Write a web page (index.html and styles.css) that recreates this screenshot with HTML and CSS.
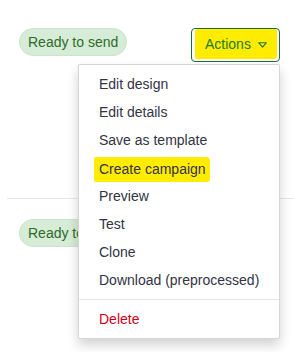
FILE: index.html
```html
<!DOCTYPE html>
<html>
<head>
<meta charset="utf-8">
<link rel="stylesheet" href="styles.css">
</head>
<body>
<div class="list">
  <div class="row row-first">
    <span class="badge">Ready to send</span>
    <div class="actions">
      <button class="btn"><span class="hl">Actions <svg class="caret" width="9" height="6" viewBox="0 0 9 6"><path d="M0.8 0.8 H8.2 L4.5 5.2 Z" fill="none" stroke="#1d7a2e" stroke-width="1.1" stroke-linejoin="round"/></svg></span></button>
      <ul class="menu">
        <li>Edit design</li>
        <li>Edit details</li>
        <li>Save as template</li>
        <li><span class="mark">Create campaign</span></li>
        <li>Preview</li>
        <li>Test</li>
        <li>Clone</li>
        <li>Download (preprocessed)</li>
        <li class="divider"></li>
        <li class="danger">Delete</li>
      </ul>
    </div>
  </div>
  <div class="row">
    <span class="badge">Ready to send</span>
    <div class="actions">
      <button class="btn"><span class="plain">Actions <svg class="caret" width="9" height="6" viewBox="0 0 9 6"><path d="M0.8 0.8 H8.2 L4.5 5.2 Z" fill="none" stroke="#1d7a2e" stroke-width="1.1" stroke-linejoin="round"/></svg></span></button>
    </div>
  </div>
</div>
</body>
</html>
```

FILE: styles.css
```css
html, body {
  margin: 0;
  padding: 0;
  background: #fff;
  font-family: "Liberation Sans", Arial, sans-serif;
  font-size: 14px;
  overflow: hidden;
}

.list {
  padding-left: 7px;
}

.row {
  display: flex;
  justify-content: space-between;
  align-items: flex-start;
  padding: 20px 14px 0 12px;
  height: 133px;
}

.row-first {
  padding-top: 28px;
  height: 199px;
  box-sizing: border-box;
  border-bottom: 1px solid #e6e6e6;
}

.badge {
  display: inline-block;
  height: 28px;
  box-sizing: border-box;
  line-height: 26px;
  padding: 0 8px;
  border: 1px solid #c9e4c9;
  border-radius: 14px;
  background: #d6ecd6;
  color: #2c6b2c;
  white-space: nowrap;
}

.actions {
  position: relative;
}

.btn {
  display: flex;
  width: 89px;
  height: 34px;
  box-sizing: border-box;
  padding: 0 2px 2px 3px;
  border: 1px solid #1e6b40;
  border-radius: 4px;
  background: #fff;
  font: inherit;
  color: #1d7a2e;
}

.hl, .plain {
  display: flex;
  align-items: center;
  flex: 1;
  height: 30px;
  padding-left: 10px;
  border-radius: 3px 2px 4px 2px;
}

.hl {
  background: #ffec00;
}

.caret {
  margin-left: 7px;
  margin-top: 1px;
}

.menu {
  position: absolute;
  top: 36px;
  right: 0;
  width: 202px;
  box-sizing: border-box;
  margin: 0;
  padding: 5px 0;
  list-style: none;
  background: #fff;
  border: 1px solid rgba(0, 0, 0, 0.16);
  border-radius: 2px;
  box-shadow: 0 6px 12px rgba(0, 0, 0, 0.18);
  z-index: 10;
}

.menu li {
  height: 28px;
  line-height: 28px;
  padding: 0 20px;
  color: #333344;
  white-space: nowrap;
}

.menu li.divider {
  height: 1px;
  margin: 5px 0;
  padding: 0;
  background: #e5e5e5;
}

.menu li.danger {
  color: #d0021b;
}

.mark {
  display: inline-block;
  line-height: 25px;
  margin-left: -5px;
  padding: 0 4px 0 5px;
  background: #ffec00;
  border-radius: 2px 4px 3px 2px;
  vertical-align: top;
  margin-top: 3px;
}
```
